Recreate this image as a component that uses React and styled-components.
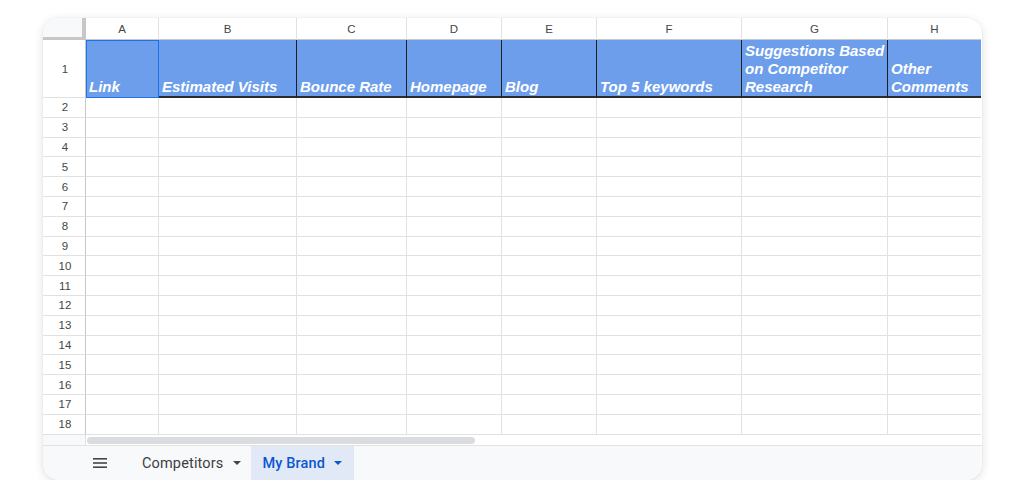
import React from "react"
import styled, { createGlobalStyle } from "styled-components"

const COLS = [
  { key: "A", width: 73, title: ["Link"] },
  { key: "B", width: 138, title: ["Estimated Visits"] },
  { key: "C", width: 110, title: ["Bounce Rate"] },
  { key: "D", width: 95, title: ["Homepage"] },
  { key: "E", width: 95, title: ["Blog"] },
  { key: "F", width: 145, title: ["Top 5 keywords"] },
  { key: "G", width: 146, title: ["Suggestions Based", "on Competitor", "Research"] },
  { key: "H", width: 93, title: ["Other", "Comments"] },
]

const ROWS = Array.from({ length: 17 }, (_, i) => i + 2)

const GlobalStyle = createGlobalStyle`
  html, body {
    margin: 0;
    padding: 0;
    background: #ffffff;
  }
  * { box-sizing: border-box; }
`

const Page = styled.div`
  padding: 18px 0 0 43px;
  font-family: "Liberation Sans", Arial, sans-serif;
`

const Card = styled.div`
  width: 939px;
  height: 462px;
  border-radius: 16px;
  overflow: hidden;
  background: #fff;
  box-shadow: 0 2px 10px rgba(0, 0, 0, 0.13), 0 0 2px rgba(0, 0, 0, 0.06);
  display: flex;
  flex-direction: column;
`

const Grid = styled.div`
  display: grid;
  grid-template-columns: 43px ${COLS.map((c) => c.width + "px").join(" ")};
  grid-template-rows: 22px 58px repeat(17, 19.8px);
`

const Corner = styled.div`
  background: #f8f9fa;
  border-right: 4px solid #c7c7c7;
  border-bottom: 3px solid #c7c7c7;
`

const ColLetter = styled.div`
  display: flex;
  align-items: center;
  justify-content: center;
  font-family: "Liberation Sans", Arial, sans-serif;
  font-size: 11.5px;
  color: #444746;
  background: #fff;
  border-right: ${(p) => (p.$last ? "none" : "1px solid #e1e1e1")};
  border-bottom: 1px solid #c7c7c7;
`

const RowNum = styled.div`
  display: flex;
  align-items: center;
  justify-content: center;
  font-family: "Liberation Sans", Arial, sans-serif;
  font-size: 11.5px;
  color: #444746;
  background: #fff;
  border-right: 1px solid #c7c7c7;
  border-bottom: 1px solid #e1e1e1;
  padding-left: 2px;
`

const TitleCell = styled.div`
  display: flex;
  align-items: flex-end;
  background: #6d9eeb;
  color: #fff;
  font-family: "Liberation Sans", Arial, sans-serif;
  font-size: 15px;
  font-weight: 700;
  font-style: italic;
  line-height: 18px;
  white-space: nowrap;
  padding: 0 0 0 3px;
  border-right: ${(p) => (p.$last ? "none" : "1px solid #1f1f1f")};
  border-bottom: 2px solid #2b2b2b;
  ${(p) =>
    p.$selected &&
    `
    border-right: 1px solid #1a73e8;
    border-bottom: 1px solid #1a73e8;
    box-shadow: inset 1px 1px 0 #1a73e8;
    padding-bottom: 1px;
  `}
`

const Cell = styled.div`
  background: #fff;
  border-right: ${(p) => (p.$last ? "none" : "1px solid #e1e1e1")};
  border-bottom: 1px solid #e1e1e1;
`

const ScrollStrip = styled.div`
  display: flex;
  height: 11px;
  background: #fff;
  border-bottom: 1px solid #e3e3e3;
`

const ScrollGutter = styled.div`
  width: 43px;
  background: #f8f9fa;
  border-right: 1px solid #e1e1e1;
`

const ScrollTrack = styled.div`
  flex: 1;
  padding: 2px 0 0 1px;
`

const Thumb = styled.div`
  width: 388px;
  height: 7px;
  border-radius: 4px;
  background: #dadce0;
`

const TabBar = styled.div`
  flex: 1;
  display: flex;
  align-items: stretch;
  background: #f8f9fa;
  padding-left: 35px;
`

const MenuButton = styled.div`
  width: 44px;
  display: flex;
  align-items: center;
  justify-content: center;
  margin-right: 8px;
`

const Tab = styled.div`
  display: flex;
  align-items: center;
  gap: ${(p) => (p.$active ? "9px" : "10px")};
  padding: 1px ${(p) => (p.$active ? "12px" : "10px")} 0 ${(p) => (p.$active ? "11px" : "12px")};
  background: ${(p) => (p.$active ? "#e1e9f7" : "transparent")};
  color: ${(p) => (p.$active ? "#0b57d0" : "#3c4043")};
  font-family: Roboto, "Noto Sans", sans-serif;
  font-size: 14.5px;
  font-weight: ${(p) => (p.$active ? 500 : 400)};
  letter-spacing: 0.15px;
`

const Hamburger = () => (
  <svg width="14" height="10" viewBox="0 0 14 10">
    <rect x="0" y="0" width="14" height="1.6" fill="#444746" />
    <rect x="0" y="4.2" width="14" height="1.6" fill="#444746" />
    <rect x="0" y="8.4" width="14" height="1.6" fill="#444746" />
  </svg>
)

const Caret = ({ color }) => (
  <svg width="8" height="4" viewBox="0 0 8 4">
    <path d="M0 0 L8 0 L4 4 Z" fill={color} />
  </svg>
)

export default function App() {
  const lastIndex = COLS.length - 1
  return (
    <Page>
      <GlobalStyle />
      <Card>
        <Grid>
          <Corner />
          {COLS.map((c, i) => (
            <ColLetter key={c.key} $last={i === lastIndex}>
              {c.key}
            </ColLetter>
          ))}

          <RowNum>1</RowNum>
          {COLS.map((c, i) => (
            <TitleCell key={c.key} $selected={i === 0} $last={i === lastIndex}>
              <span>
                {c.title.map((line, j) => (
                  <React.Fragment key={j}>
                    {j > 0 && <br />}
                    {line}
                  </React.Fragment>
                ))}
              </span>
            </TitleCell>
          ))}

          {ROWS.map((r) => (
            <React.Fragment key={r}>
              <RowNum>{r}</RowNum>
              {COLS.map((c, i) => (
                <Cell key={c.key} $last={i === lastIndex} />
              ))}
            </React.Fragment>
          ))}
        </Grid>

        <ScrollStrip>
          <ScrollGutter />
          <ScrollTrack>
            <Thumb />
          </ScrollTrack>
        </ScrollStrip>

        <TabBar>
          <MenuButton>
            <Hamburger />
          </MenuButton>
          <Tab>
            Competitors
            <Caret color="#444746" />
          </Tab>
          <Tab $active>
            My Brand
            <Caret color="#0b57d0" />
          </Tab>
        </TabBar>
      </Card>
    </Page>
  )
}
